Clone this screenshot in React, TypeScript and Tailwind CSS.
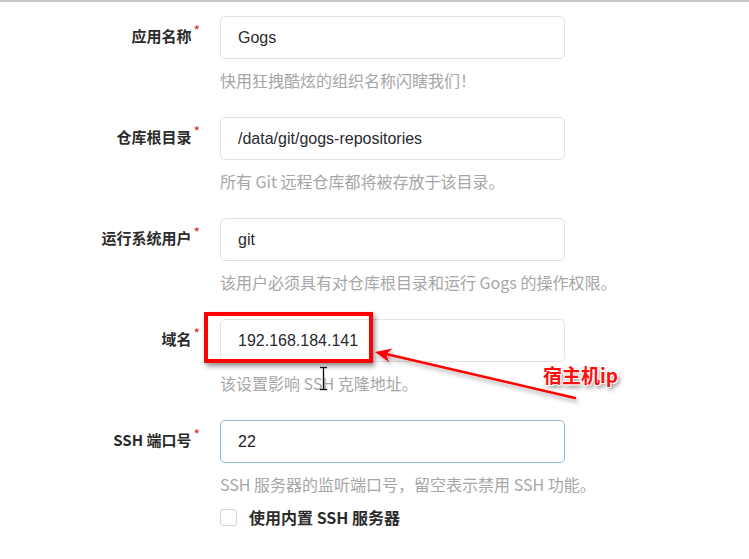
import React from "react";

type Field = {
  label: string;
  value: string;
  help: string;
  focused?: boolean;
};

const fields: Field[] = [
  { label: "应用名称", value: "Gogs", help: "快用狂拽酷炫的组织名称闪瞎我们！" },
  { label: "仓库根目录", value: "/data/git/gogs-repositories", help: "所有 Git 远程仓库都将被存放于该目录。" },
  { label: "运行系统用户", value: "git", help: "该用户必须具有对仓库根目录和运行 Gogs 的操作权限。" },
  { label: "域名", value: "192.168.184.141", help: "该设置影响 SSH 克隆地址。" },
  { label: "SSH 端口号", value: "22", help: "SSH 服务器的监听端口号，留空表示禁用 SSH 功能。", focused: true },
];

function Row({ f }: { f: Field }) {
  return (
    <div className="flex mb-[27px]">
      <div className="w-[220px] h-[43px] flex items-center justify-end pr-[20px] pb-[4px]">
        <span className="font-bold text-[15px] text-[#2b2b2b] leading-[20px]">{f.label}</span>
        <span className="self-start mt-[8px] ml-[2px] text-[14px] leading-[13px] text-[#db2828]">*</span>
      </div>
      <div className="w-[345px]">
        <div
          className={
            f.focused
              ? "h-[43px] rounded-[5px] border border-[#8fbcd8] bg-white flex items-center pl-[17px] text-[16px] text-[#222] font-['Liberation_Sans',Arial,sans-serif]"
              : "h-[43px] rounded-[5px] border border-[#e2e2e2] bg-white flex items-center pl-[17px] text-[16px] text-[#2a2a30] font-['Liberation_Sans',Arial,sans-serif]"
          }
        >
          {f.value}
        </div>
        <div className="mt-[11px] leading-[20px] text-[16px] text-[#a6a6a6] whitespace-nowrap">{f.help}</div>
      </div>
    </div>
  );
}

export default function App() {
  return (
    <div className="relative w-[749px] h-[559px] overflow-hidden bg-white border-t-2 border-[#c9c9c9] font-['Noto_Sans_CJK_SC','Noto_Sans',sans-serif]">
      <div className="pt-[14px]">
        {fields.map((f) => (
          <Row key={f.label} f={f} />
        ))}
        <div className="flex -mt-[14px]">
          <div className="w-[220px]" />
          <div className="flex items-center gap-[12px]">
            <div className="w-[17px] h-[17px] rounded-[3px] border border-[#d4d4d5] bg-white" />
            <span className="font-bold text-[16px] text-[#2b2b2b] leading-[20px]">使用内置 SSH 服务器</span>
          </div>
        </div>
      </div>

      {/* annotation: red highlight box */}
      <div className="absolute left-[204px] top-[310px] w-[169px] h-[51px] border-[4px] border-[#ff0000] shadow-[2px_3px_5px_rgba(0,0,0,0.45)]" />

      {/* annotation: arrow + cursor */}
      <svg className="absolute left-0 top-0 w-[749px] h-[559px] pointer-events-none" viewBox="0 0 749 559">
        <defs>
          <filter id="sh" x="-10%" y="-50%" width="120%" height="200%">
            <feDropShadow dx="2" dy="3" stdDeviation="2" floodColor="#000" floodOpacity="0.35" />
          </filter>
        </defs>
        <g filter="url(#sh)">
          <path d="M575,396 L386,352" stroke="#ff0000" strokeWidth="2.5" strokeLinecap="round" fill="none" />
          <path d="M375,350 L392.5,346.6 L386,352.3 L389.2,360.2 Z" fill="#ff0000" />
        </g>
        <g stroke="#111" strokeWidth="1.3" fill="none">
          <path d="M320,365.5 L327,365.5" />
          <path d="M323.5,366 L323.5,387" />
          <path d="M320,387.5 L327,387.5" />
        </g>
      </svg>

      {/* annotation: label */}
      <div className="absolute left-[543px] top-[360px] font-bold text-[19px] leading-[26px] text-[#ff0d0d] [text-shadow:-1px_-1px_0_#fff,1px_-1px_0_#fff,-1px_1px_0_#fff,1px_1px_0_#fff,0_0_2px_#fff,2px_3px_4px_rgba(0,0,0,0.55)]">
        宿主机ip
      </div>
    </div>
  );
}
